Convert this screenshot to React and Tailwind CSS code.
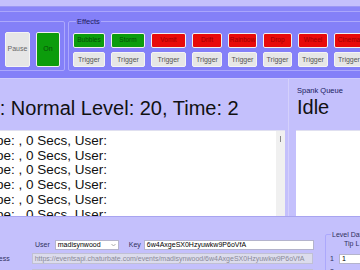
const effects = [
  { name: "Bubbles", on: true, w: "w-[32px]" },
  { name: "Storm", on: true, w: "w-[34px]" },
  { name: "Vomit", on: false, w: "w-[35px]" },
  { name: "Drift", on: false, w: "w-[30px]" },
  { name: "Rainbow", on: false, w: "w-[29px]" },
  { name: "Drop", on: false, w: "w-[29px]" },
  { name: "Wheel", on: false, w: "w-[30px]" },
  { name: "Cinema", on: false, w: "w-[30px]" },
];

const rows = Array.from({ length: 8 });

const App = () => {
  return (
    <div className="w-[360px] h-[270px] overflow-hidden bg-[#c4c0fc] flex flex-col font-['Liberation_Sans',Arial,sans-serif] text-black">
      {/* top strips */}
      <div className="h-[6px] shrink-0 bg-[#c4c0fc]"></div>
      <div className="h-[1px] shrink-0 bg-[#9c98f4]"></div>
      <div className="h-[4px] shrink-0 bg-[#8a86f8]"></div>
      <div className="h-[1px] shrink-0 bg-[#aaa6fc]"></div>

      {/* toolbar */}
      <div className="h-[66px] shrink-0 bg-[#8480f8] flex items-start pt-[5px] overflow-hidden">
        <fieldset className="-ml-[20px] w-[85px] shrink-0 border border-[#aca8fc] rounded-[2px] flex justify-end pr-[4px] pb-[3px]">
          <legend className="text-[7.5px] leading-[9px] ml-[2px] px-[1px] text-[#202060]">&nbsp;</legend>
          <div className="flex gap-[6px] pt-[6px]">
            <button className="w-[25px] h-[35px] bg-[#e6e6e6] border border-[#f4f4f4] rounded-[2px] text-[7px] text-[#666]">Pause</button>
            <button className="w-[24px] h-[35px] bg-[#0c9c0c] border border-[#f0f0f0] rounded-[2px] text-[7px] text-[#064f06]">On</button>
          </div>
        </fieldset>

        <fieldset className="ml-[3px] shrink-0 border border-[#aca8fc] rounded-[2px] pl-[4px] pr-[4px] pb-[3px]">
          <legend className="text-[7.5px] leading-[9px] ml-[3px] px-[1px] text-[#202060]">Effects</legend>
          <div className="flex gap-[6px] pt-[7px]">
            {effects.map((e) => (
              <div key={e.name} className={`${e.w} flex flex-col gap-[4px]`}>
                <button
                  className={`h-[15px] w-full border border-[#f0f0f0] rounded-[2px] text-[6.5px] leading-none ${
                    e.on ? "bg-[#0c9c0c] text-[#064f06]" : "bg-[#e80a0a] text-[#a00000]"
                  }`}
                >
                  {e.name}
                </button>
                <button className="h-[15px] w-full bg-[#e6e6e6] border border-[#f4f4f4] rounded-[2px] text-[7px] leading-none text-[#555]">
                  Trigger
                </button>
              </div>
            ))}
          </div>
        </fieldset>
      </div>

      {/* middle */}
      <div className="h-[138px] shrink-0 flex border-t border-[#d0ccfc]">
        <div className="-ml-[62px] w-[347px] shrink-0 flex flex-col">
          <div className="h-[51px] shrink-0 pt-[18px] pl-[5px] text-[20px] leading-[23px] text-[#111] whitespace-nowrap">
            Status: Normal Level: 20, Time: 2
          </div>
          <div className="flex-1 flex bg-white border-t border-[#e0e0f0] overflow-hidden">
            <div className="flex-1 pt-[3px] pl-[2px] text-[13.5px] leading-[14.7px] text-[#111] whitespace-nowrap">
              {rows.map((_, i) => (
                <div key={i}>Spank Type: , 0 Secs, User:</div>
              ))}
            </div>
            <div className="w-[9px] shrink-0 bg-[#f0f0f0] flex justify-center pt-[5px]">
              <svg width="5" height="6" viewBox="0 0 5 6">
                <path d="M2.5 0 L2.5 6" stroke="#888" strokeWidth="1" />
              </svg>
            </div>
          </div>
        </div>

        <div className="ml-[3px] w-[1px] shrink-0 bg-[#d4d0fc]"></div>

        <div className="ml-[7px] w-[80px] shrink-0 flex flex-col">
          <div className="h-[51px] shrink-0 pt-[7px] pl-[1px]">
            <div className="text-[7.5px] leading-[9px] text-[#202060]">Spank Queue</div>
            <div className="mt-[1px] text-[20px] leading-[23px] text-[#111]">Idle</div>
          </div>
          <div className="flex-1 bg-white border-t border-[#e0e0f0]"></div>
        </div>
      </div>

      {/* bottom */}
      <div className="flex-1 flex border-t border-[#a8a4f0] text-[7px] leading-[8px]">
        <div className="w-[325px] shrink-0 flex flex-col pt-[23px]">
          <div className="flex items-center h-[10px]">
            <span className="ml-[35px] text-[#303060]">User</span>
            <div className="ml-[5px] w-[64px] h-[10px] bg-white border border-[#b4b4cc] flex items-center justify-between px-[2px]">
              <span>madisynwood</span>
              <svg width="5" height="4" viewBox="0 0 5 4">
                <path d="M0.5 1 L2.5 3 L4.5 1" fill="none" stroke="#999" strokeWidth="0.8" />
              </svg>
            </div>
            <span className="ml-[10px] text-[#303060]">Key</span>
            <div className="ml-[3px] w-[170px] h-[10px] bg-white border border-[#b4b4cc] flex items-center px-[2px]">
              6w4AxgeSX0Hzyuwkw9P6oVfA
            </div>
          </div>
          <div className="flex items-center h-[11px] mt-[3px]">
            <span className="-ml-[16px] text-[#303060]">Address</span>
            <div className="ml-[22px] w-[281px] h-[11px] bg-[#dcdcec] border border-[#c0c0d4] flex items-center px-[2px] text-[#8a8a9a] whitespace-nowrap overflow-hidden">
              https://eventsapi.chaturbate.com/events/madisynwood/6w4AxgeSX0Hzyuwkw9P6oVfA
            </div>
          </div>
          <div className="ml-[32px] mt-[5px] w-[281px] h-[11px] bg-[#f4f4fc] border border-[#c0c0d4]"></div>
        </div>

        <fieldset className="mt-[13px] w-[60px] shrink-0 border border-[#aca8fc] rounded-[2px] pl-[4px]">
          <legend className="text-[7px] leading-[9px] ml-[1px] px-[1px] text-[#303060] whitespace-nowrap">Level Data</legend>
          <div className="pl-[14px] mt-[1px] text-[#303060]">Tip L</div>
          <div className="flex items-center mt-[6px]">
            <span className="text-[#303060]">1</span>
            <div className="ml-[5px] w-[30px] h-[10px] bg-white border border-[#b4b4cc] px-[2px] flex items-center">1</div>
          </div>
          <div className="flex items-center mt-[4px]">
            <span className="text-[#303060]">2</span>
          </div>
        </fieldset>
      </div>
    </div>
  );
};

export default App;
